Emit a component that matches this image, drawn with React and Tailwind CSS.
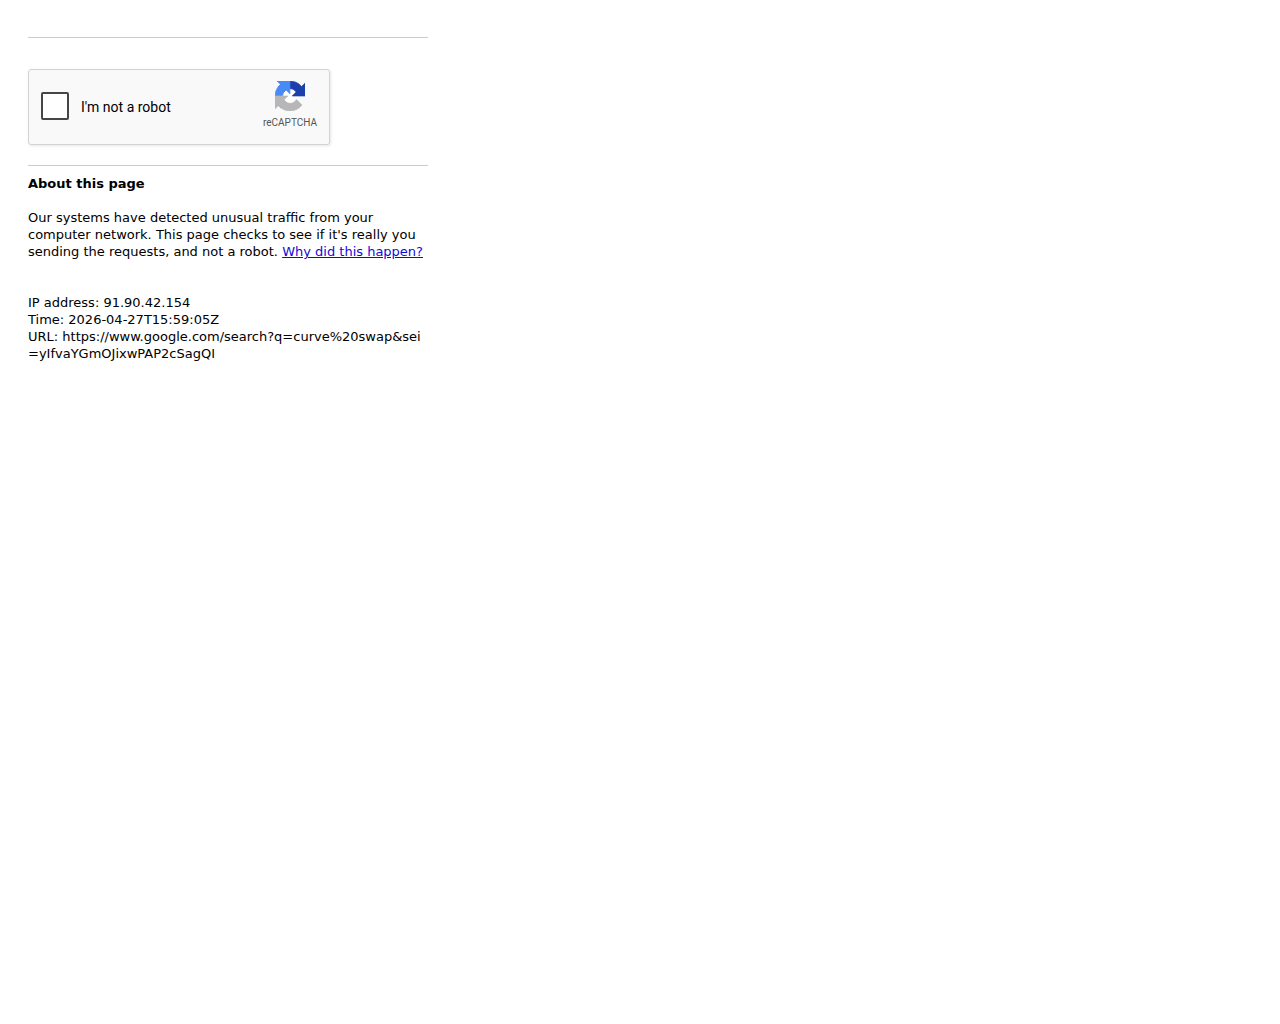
function RecaptchaLogo() {
  return (
    <svg viewBox="0 0 64 64" className="h-[30px] w-[30px]" strokeWidth="1.5" aria-hidden="true">
      <circle cx="32" cy="32" r="17" fill="#fff" />
      <path
        fill="#1c3fac"
        stroke="#1c3fac"
        d="M64 31.955l-.033-1.37V4.687l-7.16 7.16C50.948 4.674 42.033.093 32.05.093c-10.4 0-19.622 4.96-25.458 12.64l11.736 11.86a15.55 15.55 0 0 1 4.754-5.334c2.05-1.6 4.952-2.906 8.968-2.906.485 0 .86.057 1.135.163 4.976.393 9.288 3.14 11.828 7.124l-8.307 8.307L64 31.953"
      />
      <path
        fill="#4a8af4"
        stroke="#4a8af4"
        d="M31.862.094l-1.37.033H4.594l7.16 7.16C4.58 13.147 0 22.06 0 32.046c0 10.4 4.96 19.622 12.64 25.458L24.5 45.768a15.55 15.55 0 0 1-5.334-4.754c-1.6-2.05-2.906-4.952-2.906-8.968 0-.485.057-.86.163-1.135.393-4.976 3.14-9.288 7.124-11.828l8.307 8.307L31.86.095"
      />
      <path
        fill="#b7b7b7"
        stroke="#b7b7b7"
        d="M.001 32.045l.033 1.37v25.898l7.16-7.16c5.86 7.173 14.774 11.754 24.76 11.754 10.4 0 19.622-4.96 25.458-12.64l-11.736-11.86a15.55 15.55 0 0 1-4.754 5.334c-2.05 1.6-4.952 2.906-8.968 2.906-.485 0-.86-.057-1.135-.163-4.976-.393-9.288-3.14-11.828-7.124l8.307-8.307c-10.522.04-22.4.066-27.295-.005"
      />
    </svg>
  );
}

function Recaptcha() {
  return (
    <div className="flex h-[76px] w-[302px] justify-between rounded-[3px] border border-[#d3d3d3] bg-[#f9f9f9] px-3 font-['Roboto',sans-serif] shadow-[1px_1px_3px_rgba(0,0,0,0.1)]">
      <div className="flex items-start gap-3 pt-[22px]">
        <input
          id="not-a-robot"
          type="checkbox"
          className="h-7 w-7 appearance-none rounded-xs border-2 border-[#444746] bg-white checked:bg-[#4285f4]"
        />
        <label htmlFor="not-a-robot" className="text-sm leading-[30px]">
          I'm not a robot
        </label>
      </div>
      <div className="flex flex-col items-center gap-1 pt-[11px]">
        <RecaptchaLogo />
        <span className="text-[10px] leading-4 text-[#555]">reCAPTCHA</span>
      </div>
    </div>
  );
}

export default function App() {
  return (
    <main className="max-w-[456px] px-7 pt-[37px] pb-7 font-['DejaVu_Sans',sans-serif] text-[13px] leading-[17px] text-black">
      <hr className="border-[#ccc]" />
      <form className="mt-[31px] mb-5">
        <Recaptcha />
      </form>
      <hr className="mb-[9px] border-[#ccc]" />

      <h1 className="mb-[17px] font-bold">About this page</h1>
      <p className="mb-[34px]">
        Our systems have detected unusual traffic from your computer network. This page checks to
        see if it's really you sending the requests, and not a robot.{" "}
        <a href="#why" className="text-[#0f0bd4] underline">
          Why did this happen?
        </a>
      </p>

      {/* Request details */}
      <div className="break-all">
        <p>IP address: 91.90.42.154</p>
        <p>Time: 2026-04-27T15:59:05Z</p>
        <p>URL: https://www.google.com/search?q=curve%20swap&amp;sei=yIfvaYGmOJixwPAP2cSagQI</p>
      </div>
    </main>
  );
}
